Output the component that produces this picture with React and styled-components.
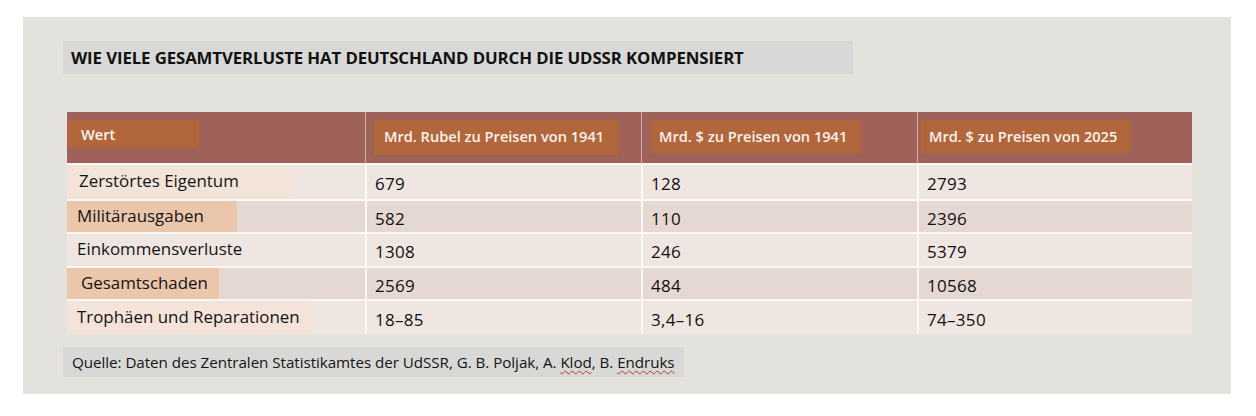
import React from "react";
import styled, { createGlobalStyle } from "styled-components";

const Global = createGlobalStyle`
  html, body { margin: 0; padding: 0; background: #ffffff; }
  body { font-family: "Open Sans", "Liberation Sans", sans-serif; }
`;

const Page = styled.div`
  padding: 17px 0 0 23px;
`;

const Panel = styled.section`
  width: 1208px;
  height: 377px;
  box-sizing: border-box;
  background: #e3e2dd;
  padding: 24px 0 0 40px;
  display: flex;
  flex-direction: column;
  align-items: flex-start;
`;

const TitleBox = styled.h1`
  margin: 0;
  width: 790px;
  height: 33px;
  box-sizing: border-box;
  background: #d8d8d6;
  display: flex;
  align-items: center;
  padding: 0 0 0 8px;
  font-size: 16.8px;
  font-weight: 700;
  color: #111;
  letter-spacing: -0.1px;
  white-space: nowrap;
`;

const Table = styled.div`
  margin: 38px 0 0 4px;
  width: 1125px;
  display: flex;
  flex-direction: column;
`;

const Row = styled.div`
  display: grid;
  grid-template-columns: 298px 276px 276px 275px;
  height: ${(p) => p.$h}px;
  background: ${(p) => p.$bg};
  border-top: ${(p) => (p.$first ? "none" : "2px solid #fbf7f5")};
  box-sizing: border-box;
`;

const HeadCell = styled.div`
  border-left: ${(p) => (p.$first ? "none" : "1.5px solid #d6aea8")};
  padding: 8px 0 0 ${(p) => p.$off}px;
  box-sizing: border-box;
`;

const HeadLabel = styled.div`
  width: ${(p) => p.$w}px;
  height: ${(p) => p.$h}px;
  box-sizing: border-box;
  background: #b2663b;
  color: #fbf3ee;
  font-size: 14.6px;
  font-weight: 600;
  line-height: 20px;
  padding: ${(p) => p.$pt}px 0 0 ${(p) => p.$pl}px;
  white-space: nowrap;
`;

const LabelCell = styled.div`
  display: flex;
  align-items: stretch;
`;

const Highlight = styled.div`
  width: ${(p) => p.$w}px;
  background: ${(p) => p.$bg};
  display: flex;
  align-items: center;
  padding-left: ${(p) => p.$pl}px;
  box-sizing: border-box;
  font-size: 16.9px;
  color: #151515;
  white-space: nowrap;
  padding-bottom: 3px;
`;

const NumCell = styled.div`
  border-left: 2px solid #fbf7f5;
  display: flex;
  align-items: center;
  padding: 3px 0 0 8px;
  font-size: 17px;
  font-weight: 500;
  color: #111;
  letter-spacing: 0.3px;
`;

const Source = styled.p`
  margin: 13px 0 0 0;
  height: 30px;
  width: 621px;
  box-sizing: border-box;
  background: #d8d8d6;
  display: flex;
  align-items: center;
  padding: 0 0 0 9px;
  font-size: 15.2px;
  letter-spacing: -0.05px;
  color: #151515;
  white-space: nowrap;
`;

const Squiggle = styled.span`
  text-decoration: underline wavy #c0392b;
  text-decoration-thickness: 1px;
  text-underline-offset: 2px;
`;

const headers = [
  { text: "Wert", off: 1, w: 131, h: 28, pt: 4, pl: 13 },
  { text: "Mrd. Rubel zu Preisen von 1941", off: 8, w: 245, h: 35, pt: 6, pl: 10 },
  { text: "Mrd. $ zu Preisen von 1941", off: 9, w: 210, h: 33, pt: 6, pl: 8 },
  { text: "Mrd. $ zu Preisen von 2025", off: 3, w: 210, h: 33, pt: 6, pl: 8 },
];

const rows = [
  { label: "Zerstörtes Eigentum", vals: ["679", "128", "2793"], bg: "#efe5e1", hl: "#f3e4da", hw: 226, pl: 12, h: 36 },
  { label: "Militärausgaben", vals: ["582", "110", "2396"], bg: "#e5d7d1", hl: "#eac6ab", hw: 170, pl: 10, h: 33 },
  { label: "Einkommensverluste", vals: ["1308", "246", "5379"], bg: "#efe5e1", hl: "#efe5e1", hw: 200, pl: 10, h: 34 },
  { label: "Gesamtschaden", vals: ["2569", "484", "10568"], bg: "#e5d7d1", hl: "#eac6ab", hw: 152, pl: 14, h: 33 },
  { label: "Trophäen und Reparationen", vals: ["18–85", "3,4–16", "74–350"], bg: "#efe5e1", hl: "#f3e3d9", hw: 243, pl: 10, h: 35 },
];

export default function App() {
  return (
    <>
      <Global />
      <Page>
        <Panel>
          <TitleBox>WIE VIELE GESAMTVERLUSTE HAT DEUTSCHLAND DURCH DIE UDSSR KOMPENSIERT</TitleBox>
          <Table>
            <Row $h={51} $bg="#9f625a" $first>
              {headers.map((h, i) => (
                <HeadCell key={i} $first={i === 0} $off={h.off}>
                  <HeadLabel $w={h.w} $h={h.h} $pt={h.pt} $pl={h.pl}>
                    {h.text}
                  </HeadLabel>
                </HeadCell>
              ))}
            </Row>
            {rows.map((r, i) => (
              <Row key={i} $h={r.h} $bg={r.bg}>
                <LabelCell>
                  <Highlight $w={r.hw} $bg={r.hl} $pl={r.pl}>
                    {r.label}
                  </Highlight>
                </LabelCell>
                {r.vals.map((v, j) => (
                  <NumCell key={j}>{v}</NumCell>
                ))}
              </Row>
            ))}
          </Table>
          <Source>
            Quelle: Daten des Zentralen Statistikamtes der UdSSR, G. B. Poljak, A.&nbsp;
            <Squiggle>Klod</Squiggle>, B.&nbsp;<Squiggle>Endruks</Squiggle>
          </Source>
        </Panel>
      </Page>
    </>
  );
}
